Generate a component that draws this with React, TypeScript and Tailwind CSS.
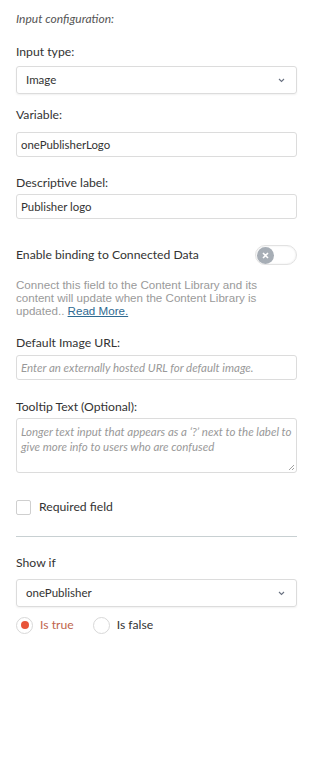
import React from "react";

const sans = { fontFamily: "Lato, 'Noto Sans', sans-serif" };

function Chevron() {
  return (
    <svg width="7" height="5" viewBox="0 0 7 5" className="text-gray-500">
      <path d="M1 1l2.5 2.5L6 1" fill="none" stroke="currentColor" strokeWidth="1.1" />
    </svg>
  );
}

export default function App() {
  return (
    <div className="w-[314px] h-[769px] bg-white text-[#333] pl-4 pr-[17px]" style={sans}>
      <div className="pt-[11px] text-[12px] italic text-[#555] leading-[16px]">Input configuration:</div>

      <div className="mt-[17px] text-[12.2px] leading-[16px]">Input type:</div>
      <div className="mt-[6px] h-[28px] border border-[#dcdcdc] rounded-[3px] flex items-center justify-between pl-[9px] pr-[11px] text-[11.5px] shadow-[0_1px_2px_rgba(0,0,0,0.06)]">
        <span>Image</span>
        <Chevron />
      </div>

      <div className="mt-[13px] text-[12.2px] leading-[16px]">Variable:</div>
      <div className="mt-[9px] h-[25px] border border-[#dcdcdc] rounded-[3px] flex items-center pl-[4px] text-[11.4px]">onePublisherLogo</div>

      <div className="mt-[18px] text-[12.2px] leading-[16px]">Descriptive label:</div>
      <div className="mt-[3px] h-[25px] border border-[#dcdcdc] rounded-[3px] flex items-center pl-[4px] text-[11.4px]">Publisher logo</div>

      <div className="mt-[26px] flex items-center justify-between h-[20px]">
        <span className="text-[12.2px]">Enable binding to Connected Data</span>
        <div className="w-[42px] h-[20px] rounded-full bg-white border border-[#e2e2e2] shadow-[inset_0_0_2px_rgba(0,0,0,0.1)] flex items-center px-[1px]">
          <div className="w-[17px] h-[17px] rounded-full bg-[#a7aeb6] flex items-center justify-center">
            <svg width="7" height="7" viewBox="0 0 7 7">
              <path d="M1 1l5 5M6 1l-5 5" stroke="white" strokeWidth="1.6" />
            </svg>
          </div>
        </div>
      </div>
      <div className="mt-[13px] text-[11.6px] leading-[13px] text-[#9a9a9a]" style={{ fontFamily: "'Liberation Sans', Arial, sans-serif" }}>
        Connect this field to the Content Library and its content will update when the Content Library is updated..{" "}
        <span className="underline text-[#2f6a92]">Read More.</span>
      </div>

      <div className="mt-[18px] text-[12.2px] leading-[16px]">Default Image URL:</div>
      <div className="mt-[4px] h-[25px] border border-[#dcdcdc] rounded-[3px] flex items-center pl-[4px] text-[11.5px] italic text-[#999]">
        Enter an externally hosted URL for default image.
      </div>

      <div className="mt-[19px] text-[12.2px] leading-[16px]">Tooltip Text (Optional):</div>
      <div className="relative mt-[3px] h-[55px] border border-[#dcdcdc] rounded-[3px] pl-[4px] pt-[5px] pr-[2px] text-[11.5px] leading-[15px] italic text-[#999]">
        Longer text input that appears as a ‘?’ next to the label to give more info to users who are confused
        <svg className="absolute right-[1px] bottom-[1px]" width="7" height="7" viewBox="0 0 7 7">
          <path d="M6 1L1 6M6 4L4 6" stroke="#888" strokeWidth="0.8" />
        </svg>
      </div>

      <div className="mt-[26px] flex items-center h-[16px]">
        <div className="w-[15px] h-[15px] border border-[#cfcfcf] rounded-[2px] bg-white" />
        <span className="ml-[8px] text-[12.2px]">Required field</span>
      </div>

      <div className="mt-[21px] border-t border-[#c8d0d2]" />

      <div className="mt-[18px] text-[12.2px] leading-[16px]">Show if</div>
      <div className="mt-[8px] h-[28px] border border-[#dcdcdc] rounded-[3px] flex items-center justify-between pl-[9px] pr-[11px] text-[11.5px] shadow-[0_1px_2px_rgba(0,0,0,0.06)]">
        <span>onePublisher</span>
        <Chevron />
      </div>

      <div className="mt-[9px] flex items-center h-[18px] text-[12.2px]">
        <div className="w-[17px] h-[17px] rounded-full border border-[#d8d8d8] flex items-center justify-center">
          <div className="w-[8px] h-[8px] rounded-full bg-[#e8553a]" />
        </div>
        <span className="ml-[7px] text-[#c0654d]">Is true</span>
        <div className="ml-[19px] w-[17px] h-[17px] rounded-full border border-[#d8d8d8]" />
        <span className="ml-[7px]">Is false</span>
      </div>
    </div>
  );
}
